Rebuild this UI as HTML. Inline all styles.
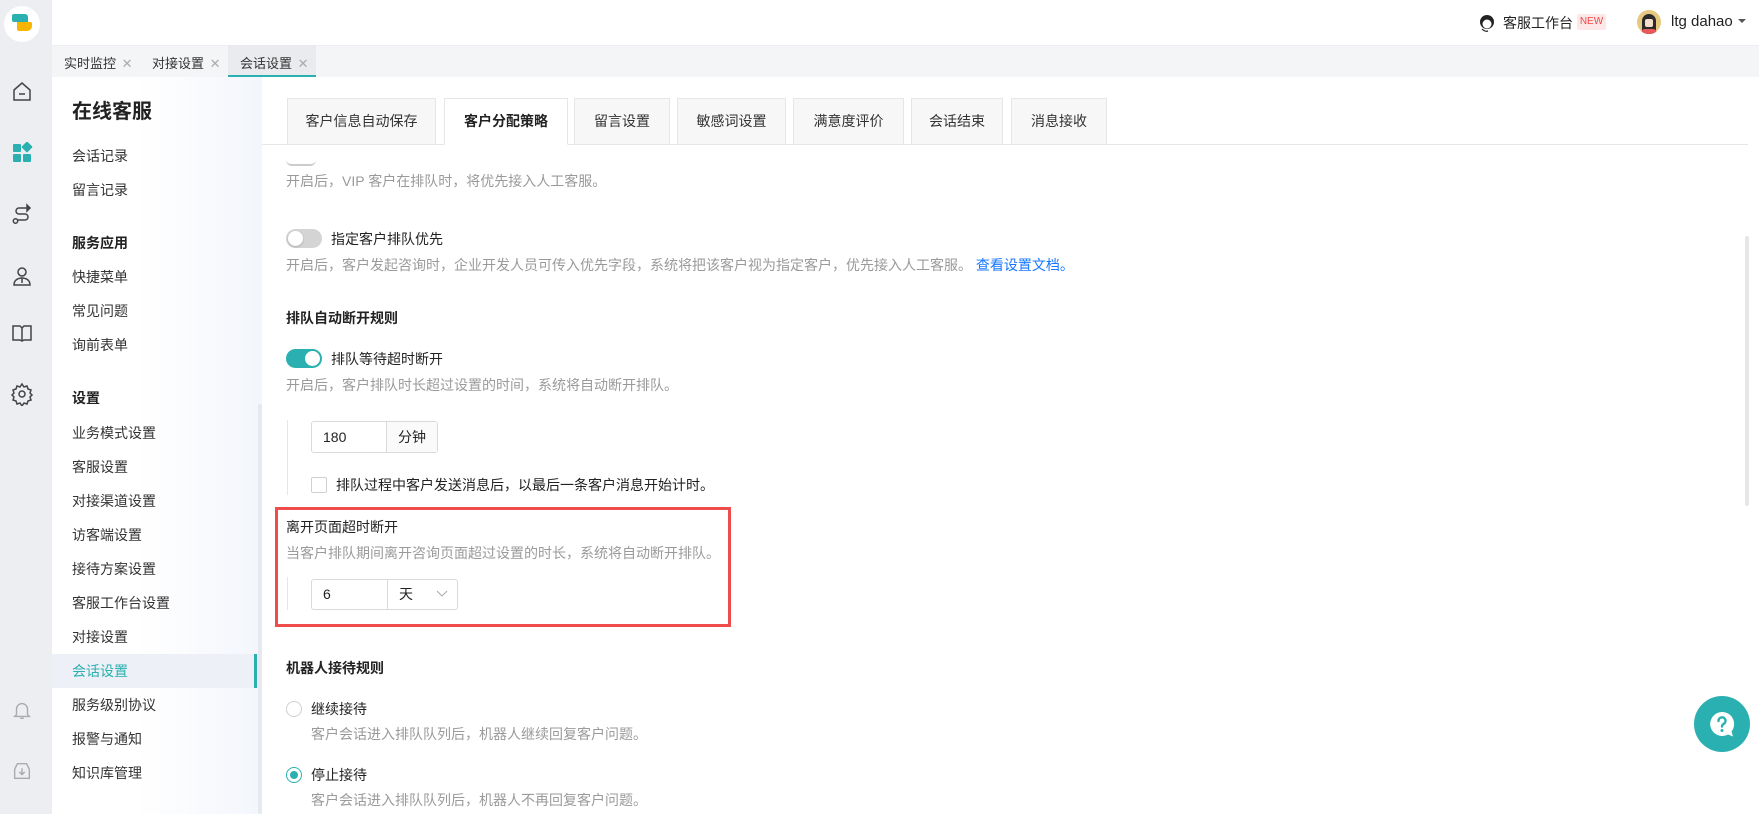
<!DOCTYPE html>
<html><head><meta charset="utf-8"><style>
*{margin:0;padding:0;box-sizing:border-box}
body{width:1759px;height:814px;overflow:hidden;background:#fff;font-family:"Liberation Sans","Noto Sans CJK SC",sans-serif;color:#222;position:relative}
.a{position:absolute;white-space:nowrap}
.rail{left:0;top:0;width:52px;height:814px;background:#eceef2}
.side{left:52px;top:77px;width:210px;height:737px;background:linear-gradient(90deg,#fff 40%,#f3f6fc)}
.mi{left:72px;font-size:14px;color:#333;line-height:20px}
.mh{left:72px;font-size:14px;font-weight:bold;color:#222;line-height:20px}
.tab{top:98px;height:47px;border:1px solid #e6e6e6;background:#f7f7f7;font-size:14px;color:#333;line-height:45px;text-align:center}
.t{font-size:14px;color:#222;line-height:20px}
.d{font-size:14px;color:#9a9a9a;line-height:20px}
.b{font-weight:bold}
</style></head><body>
<div class="a rail"></div>
<div class="a" style="left:4px;top:6px;width:36px;height:36px;border-radius:50%;background:#fff"></div>
<div class="a" style="left:12px;top:14px;width:16px;height:8px;background:#2ab0b0;border-radius:2px 3px 0 2px"></div>
<div class="a" style="left:17px;top:22px;width:15px;height:9px;background:#f7b500;border-radius:0 2px 5px 2px"></div>
<svg class="a" style="left:10px;top:80px" width="24" height="24" viewBox="0 0 24 24" fill="none" stroke="#444" stroke-width="1.5"><path d="M4 10 L12 3 L20 10 V20 H4 Z"/><path d="M9 14h6"/></svg>
<svg class="a" style="left:11px;top:142px" width="22" height="22" viewBox="0 0 22 22" fill="#2ab0b0"><rect x="2" y="2" width="8" height="8" rx="1"/><rect x="12" y="1" width="8" height="8" rx="1" transform="rotate(45 16 5)"/><rect x="2" y="12" width="8" height="8" rx="1"/><rect x="12" y="12" width="8" height="8" rx="1"/></svg>
<svg class="a" style="left:10px;top:203px" width="24" height="24" viewBox="0 0 24 24" fill="none" stroke="#444" stroke-width="1.5"><path d="M17 5H9a3 3 0 0 0 0 6h6a3 3 0 0 1 0 6H8"/><circle cx="5.5" cy="18" r="2.2"/><path d="M17 2l3 3-3 3z" fill="#444"/></svg>
<svg class="a" style="left:10px;top:265px" width="24" height="24" viewBox="0 0 24 24" fill="none" stroke="#444" stroke-width="1.5"><circle cx="12" cy="7" r="4"/><path d="M4 20c0-5 4-7 8-7s8 2 8 7z"/><path d="M12 13v5"/></svg>
<svg class="a" style="left:10px;top:321px" width="24" height="24" viewBox="0 0 24 24" fill="none" stroke="#444" stroke-width="1.5"><path d="M3 5h7l2 2 2-2h7v14h-7l-2 1-2-1H3z"/><path d="M12 7v13"/></svg>
<svg class="a" style="left:10px;top:382px" width="24" height="24" viewBox="0 0 24 24" fill="none" stroke="#444" stroke-width="1.5"><circle cx="12" cy="12" r="3"/><path d="M12 2l2 3 3-1 1 3 3 1-1 3 2 2-2 2 1 3-3 1-1 3-3-1-2 3-2-3-3 1-1-3-3-1 1-3-2-2 2-2-1-3 3-1 1-3 3 1z"/></svg>
<svg class="a" style="left:11px;top:699px" width="22" height="22" viewBox="0 0 24 24" fill="none" stroke="#aaa" stroke-width="1.5"><path d="M6 17V11a6 6 0 0 1 12 0v6l2 2H4z"/><path d="M10 21h4"/></svg>
<svg class="a" style="left:11px;top:760px" width="22" height="22" viewBox="0 0 24 24" fill="none" stroke="#aaa" stroke-width="1.5"><path d="M4 10v10h16V10"/><path d="M4 10l3-6h10l3 6"/><path d="M12 9v7M9 13l3 3 3-3"/></svg>
<div class="a" style="left:52px;top:45px;width:1707px;height:32px;background:#f4f5f7;border-top:1px solid #eceef2"></div>
<div class="a" style="left:64px;top:53px;font-size:13px;color:#333">实时监控 <span style="color:#aaa;margin-left:2px">✕</span></div>
<div class="a" style="left:152px;top:53px;font-size:13px;color:#333">对接设置 <span style="color:#aaa;margin-left:2px">✕</span></div>
<div class="a" style="left:228px;top:45px;width:88px;height:32px;background:#e9ebef;border-bottom:2px solid #2ab0b0"></div>
<div class="a" style="left:240px;top:53px;font-size:13px;color:#333">会话设置 <span style="color:#aaa;margin-left:2px">✕</span></div>
<svg class="a" style="left:1477px;top:13px" width="20" height="20" viewBox="0 0 20 20"><circle cx="10" cy="9" r="7" fill="#222"/><circle cx="10" cy="11" r="4.5" fill="#fff"/><path d="M5 16q3 3 6 2" stroke="#222" fill="none" stroke-width="1.2"/></svg>
<div class="a" style="left:1503px;top:13px;font-size:14px;color:#222">客服工作台</div>
<div class="a" style="left:1577px;top:14px;width:29px;height:16px;background:#fde8e8;color:#f04848;font-size:10px;line-height:16px;text-align:center;border-radius:2px">NEW</div>
<div class="a" style="left:1637px;top:10px;width:24px;height:24px;border-radius:50%;background:#e8c880;overflow:hidden"><div style="position:absolute;left:5px;top:4px;width:14px;height:20px;background:#2a2a2a;border-radius:7px 7px 0 0"></div><div style="position:absolute;left:8px;top:9px;width:8px;height:8px;background:#f6dccb;border-radius:2px"></div><div style="position:absolute;left:4px;top:19px;width:16px;height:8px;background:#e85a5a;border-radius:6px"></div></div>
<div class="a" style="left:1671px;top:13px;font-size:15px;color:#222">ltg dahao</div>
<div class="a" style="left:1738px;top:19px;border:4px solid transparent;border-top:4px solid #555"></div>
<div class="a side"></div>
<div class="a" style="left:72px;top:95px;font-size:20px;font-weight:bold;color:#222">在线客服</div>
<div class="a mi" style="top:146px">会话记录</div>
<div class="a mi" style="top:180px">留言记录</div>
<div class="a mh" style="top:233px">服务应用</div>
<div class="a mi" style="top:267px">快捷菜单</div>
<div class="a mi" style="top:301px">常见问题</div>
<div class="a mi" style="top:335px">询前表单</div>
<div class="a mh" style="top:388px">设置</div>
<div class="a mi" style="top:423px">业务模式设置</div>
<div class="a mi" style="top:457px">客服设置</div>
<div class="a mi" style="top:491px">对接渠道设置</div>
<div class="a mi" style="top:525px">访客端设置</div>
<div class="a mi" style="top:559px">接待方案设置</div>
<div class="a mi" style="top:593px">客服工作台设置</div>
<div class="a mi" style="top:627px">对接设置</div>
<div class="a" style="left:52px;top:654px;width:204px;height:34px;background:#edf0f7"></div>
<div class="a" style="left:254px;top:654px;width:3px;height:34px;background:#2ab0b0"></div>
<div class="a mi" style="top:661px;color:#2ab0b0">会话设置</div>
<div class="a mi" style="top:695px">服务级别协议</div>
<div class="a mi" style="top:729px">报警与通知</div>
<div class="a mi" style="top:763px">知识库管理</div>
<div class="a" style="left:258px;top:404px;width:4px;height:410px;background:#e6e9f0;border-radius:2px"></div>
<div class="a" style="left:262px;top:144px;width:1486px;height:1px;background:#e6e6e6"></div>
<div class="a tab" style="left:287px;width:149px">客户信息自动保存</div>
<div class="a tab" style="left:444px;width:124px;background:#fff;border-bottom-color:#fff;font-weight:bold;color:#222">客户分配策略</div>
<div class="a tab" style="left:574px;width:96px">留言设置</div>
<div class="a tab" style="left:677px;width:109px">敏感词设置</div>
<div class="a tab" style="left:793px;width:111px">满意度评价</div>
<div class="a tab" style="left:911px;width:92px">会话结束</div>
<div class="a tab" style="left:1011px;width:96px">消息接收</div>
<div class="a" style="left:286px;top:160px;width:30px;height:6px;border-bottom:2px solid #ccc;border-radius:0 0 10px 10px"></div>
<div class="a d" style="left:286px;top:171px">开启后，VIP 客户在排队时，将优先接入人工客服。</div>
<div class="a" style="left:286px;top:229px;width:36px;height:19px;border-radius:10px;background:#d4d4d4"></div>
<div class="a" style="left:288px;top:231px;width:15px;height:15px;border-radius:50%;background:#fff;box-shadow:0 1px 2px rgba(0,0,0,.2)"></div>
<div class="a t" style="left:331px;top:229px">指定客户排队优先</div>
<div class="a d" style="left:286px;top:255px">开启后，客户发起咨询时，企业开发人员可传入优先字段，系统将把该客户视为指定客户，优先接入人工客服。 <span style="color:#1677ff">查看设置文档。</span></div>
<div class="a t b" style="left:286px;top:308px">排队自动断开规则</div>
<div class="a" style="left:286px;top:349px;width:36px;height:19px;border-radius:10px;background:#2ab0b0"></div>
<div class="a" style="left:305px;top:351px;width:15px;height:15px;border-radius:50%;background:#fff"></div>
<div class="a t" style="left:331px;top:349px">排队等待超时断开</div>
<div class="a d" style="left:286px;top:375px">开启后，客户排队时长超过设置的时间，系统将自动断开排队。</div>
<div class="a" style="left:287px;top:420px;width:1px;height:75px;background:#e6e6e6"></div>
<div class="a" style="left:311px;top:421px;width:127px;height:32px;border:1px solid #d9d9d9;border-radius:3px"></div>
<div class="a" style="left:386px;top:422px;width:51px;height:30px;background:#fafafa;border-left:1px solid #d9d9d9"></div>
<div class="a t" style="left:323px;top:427px">180</div>
<div class="a t" style="left:398px;top:427px">分钟</div>
<div class="a" style="left:311px;top:477px;width:16px;height:16px;border:1px solid #d0d0d0;border-radius:2px"></div>
<div class="a t" style="left:336px;top:475px">排队过程中客户发送消息后，以最后一条客户消息开始计时。</div>
<div class="a" style="left:275px;top:507px;width:456px;height:120px;border:3px solid #ef4c4c"></div>
<div class="a t" style="left:286px;top:517px">离开页面超时断开</div>
<div class="a d" style="left:286px;top:543px">当客户排队期间离开咨询页面超过设置的时长，系统将自动断开排队。</div>
<div class="a" style="left:287px;top:577px;width:1px;height:33px;background:#e6e6e6"></div>
<div class="a" style="left:311px;top:579px;width:147px;height:31px;border:1px solid #d9d9d9;border-radius:3px"></div>
<div class="a" style="left:387px;top:580px;width:1px;height:29px;background:#d9d9d9"></div>
<div class="a t" style="left:323px;top:584px">6</div>
<div class="a t" style="left:399px;top:584px">天</div>
<svg class="a" style="left:436px;top:590px" width="12" height="8" viewBox="0 0 12 8"><path d="M1 1l5 5 5-5" stroke="#aaa" fill="none"/></svg>
<div class="a t b" style="left:286px;top:658px">机器人接待规则</div>
<div class="a" style="left:286px;top:701px;width:16px;height:16px;border:1px solid #d0d0d0;border-radius:50%"></div>
<div class="a t" style="left:311px;top:699px">继续接待</div>
<div class="a d" style="left:311px;top:724px">客户会话进入排队队列后，机器人继续回复客户问题。</div>
<div class="a" style="left:286px;top:767px;width:16px;height:16px;border:1px solid #2ab0b0;border-radius:50%"></div>
<div class="a" style="left:290px;top:771px;width:8px;height:8px;background:#2ab0b0;border-radius:50%"></div>
<div class="a t" style="left:311px;top:765px">停止接待</div>
<div class="a d" style="left:311px;top:790px">客户会话进入排队队列后，机器人不再回复客户问题。</div>
<div class="a" style="left:1745px;top:236px;width:4px;height:270px;background:#e6e6e6;border-radius:2px"></div>
<div class="a" style="left:1694px;top:696px;width:56px;height:56px;border-radius:50%;background:#2ab0b0"></div>
<svg class="a" style="left:1706px;top:708px" width="32" height="32" viewBox="0 0 32 32"><path d="M16 4a12 12 0 1 0 6 22.5l5 2-1.5-5A12 12 0 0 0 16 4z" fill="#fff"/><path d="M12.5 13a3.5 3.5 0 1 1 5 3c-1 .6-1.5 1.2-1.5 2.5" stroke="#2ab0b0" stroke-width="2.4" fill="none" stroke-linecap="round"/><circle cx="16" cy="22.5" r="1.5" fill="#2ab0b0"/></svg>
</body></html>
